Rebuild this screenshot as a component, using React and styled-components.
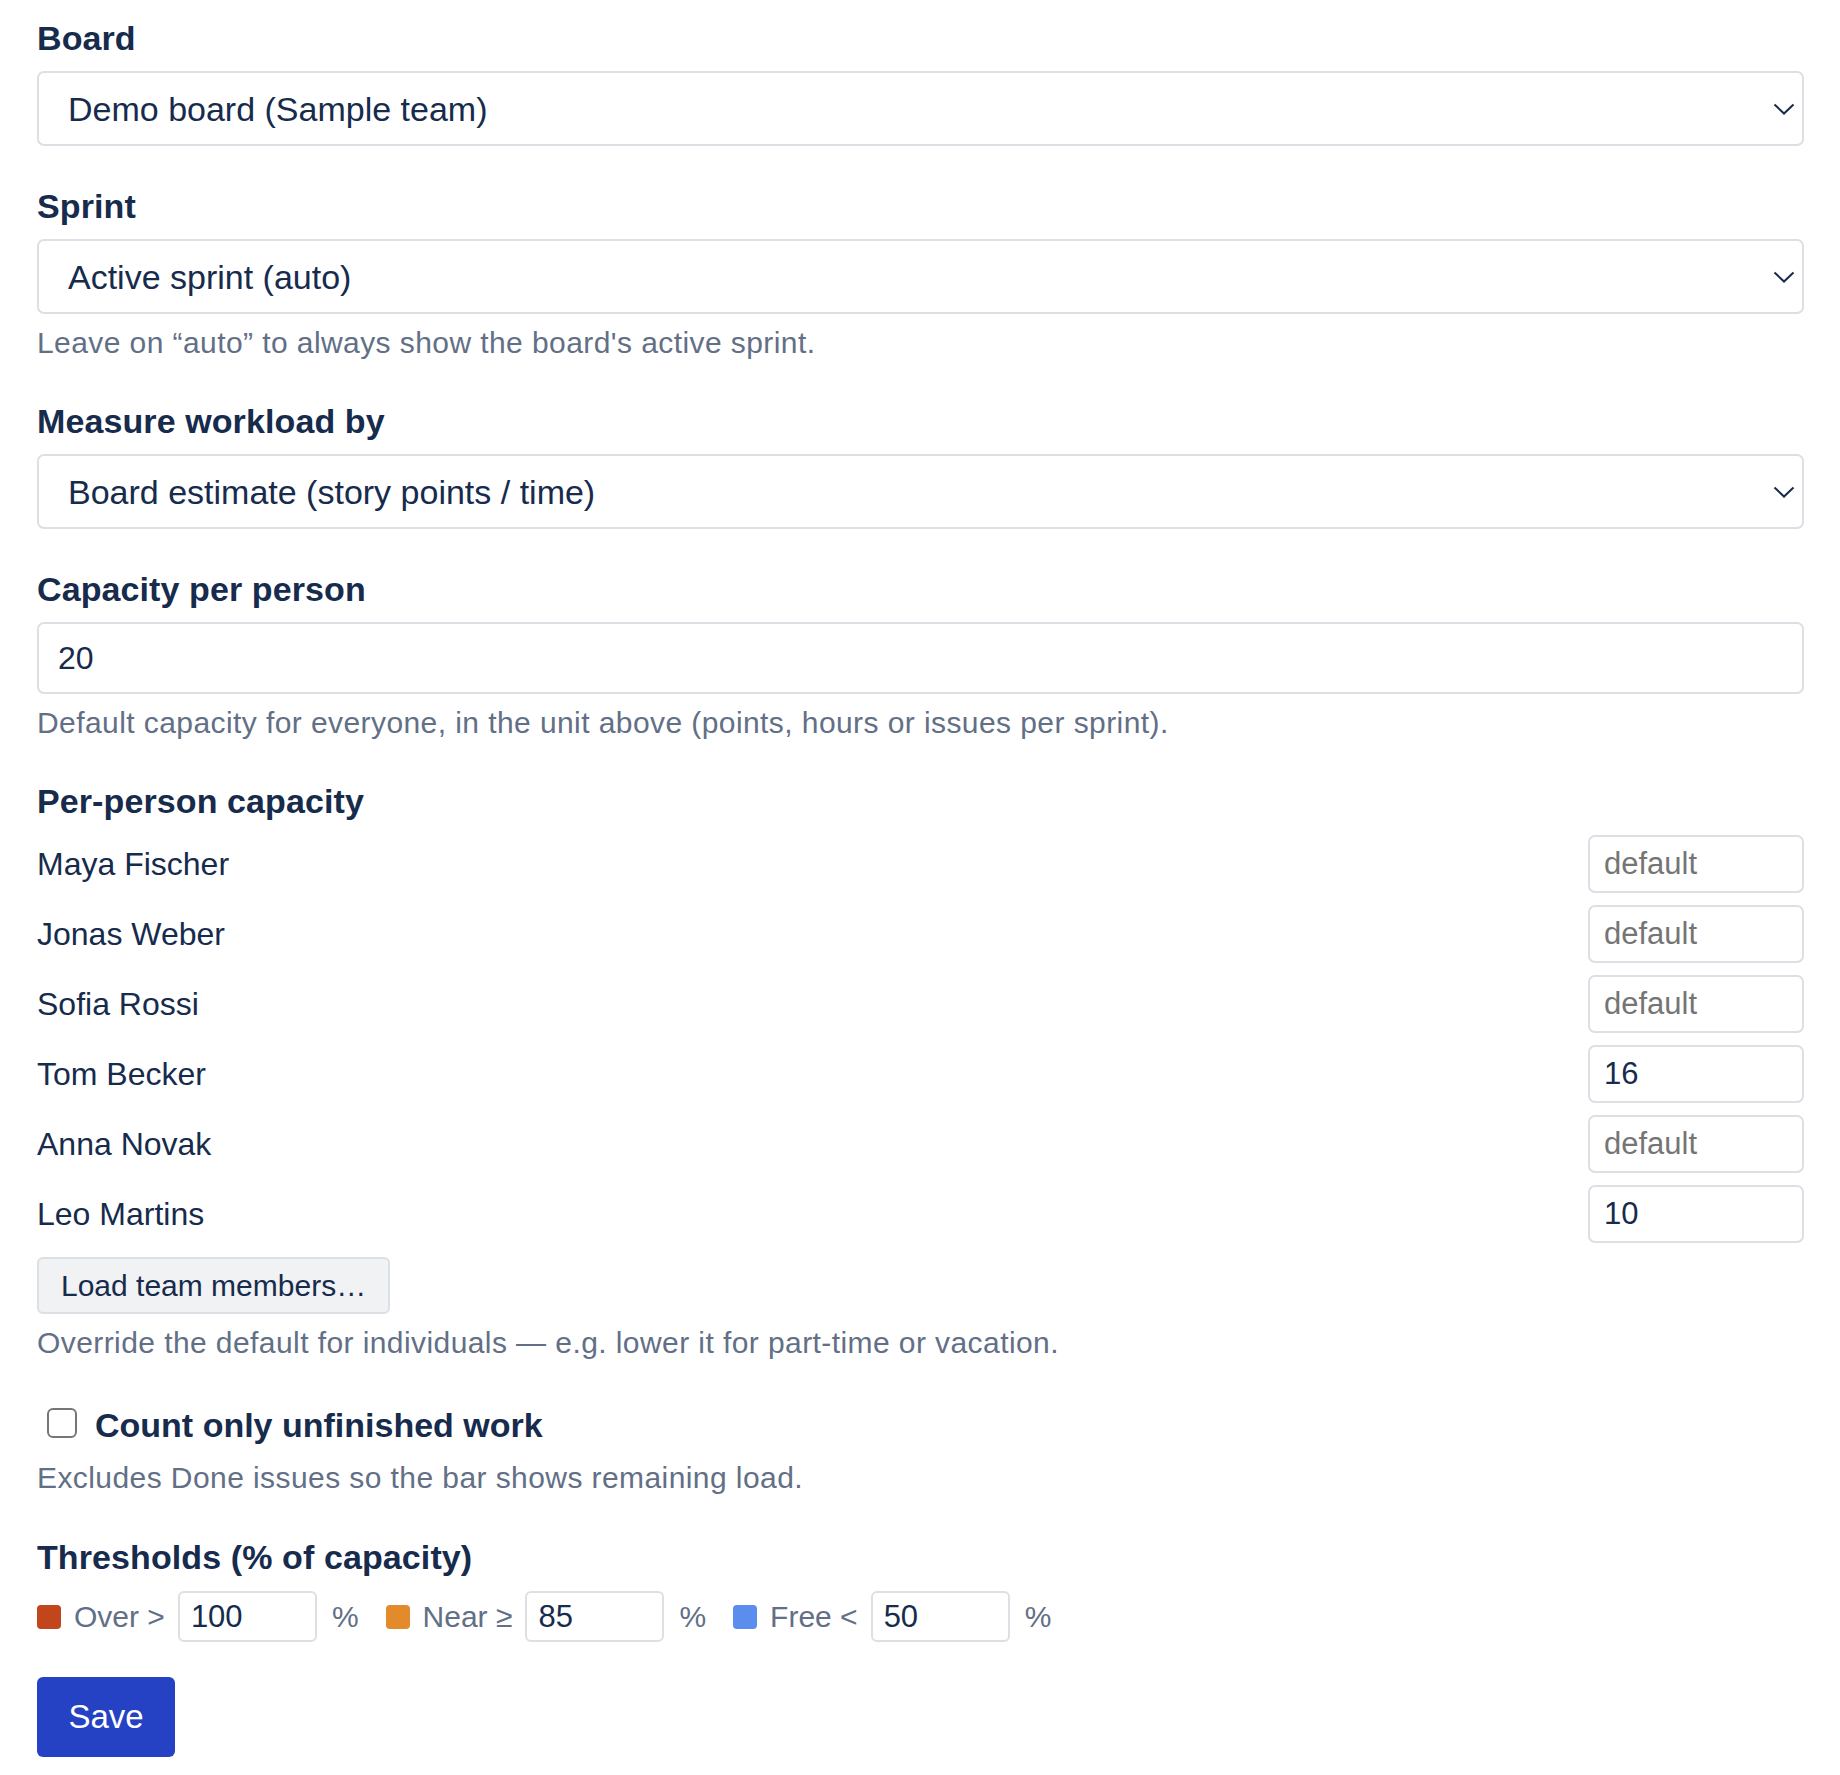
import styled, { createGlobalStyle } from "styled-components";

const GlobalStyle = createGlobalStyle`
  html, body {
    margin: 0;
    padding: 0;
    background: #ffffff;
  }
  body {
    font-family: "Liberation Sans", Arial, sans-serif;
    color: #172b4d;
  }
`;

const members = [
  { name: "Maya Fischer", value: "" },
  { name: "Jonas Weber", value: "" },
  { name: "Sofia Rossi", value: "" },
  { name: "Tom Becker", value: "16" },
  { name: "Anna Novak", value: "" },
  { name: "Leo Martins", value: "10" },
];

const thresholds = [
  { color: "#c2461c", label: "Over >", value: "100" },
  { color: "#e38a2b", label: "Near ≥", value: "85" },
  { color: "#5b8def", label: "Free <", value: "50" },
];

const ChevronIcon = () => (
  <svg width="22" height="12" viewBox="0 0 22 12" fill="none">
    <path d="M1.5 1.5 L11 10.5 L20.5 1.5" stroke="#172b4d" strokeWidth="2" />
  </svg>
);

const SelectField = ({ options }) => (
  <SelectWrap>
    <Select defaultValue={options[0]}>
      {options.map((o) => (
        <option key={o}>{o}</option>
      ))}
    </Select>
    <Chevron>
      <ChevronIcon />
    </Chevron>
  </SelectWrap>
);

const App = () => {
  return (
    <Page>
      <GlobalStyle />
      <Field>
        <Label>Board</Label>
        <SelectField options={["Demo board (Sample team)"]} />
      </Field>

      <Field>
        <Label>Sprint</Label>
        <SelectField options={["Active sprint (auto)"]} />
        <Help>Leave on “auto” to always show the board's active sprint.</Help>
      </Field>

      <Field>
        <Label>Measure workload by</Label>
        <SelectField options={["Board estimate (story points / time)"]} />
      </Field>

      <Field>
        <Label>Capacity per person</Label>
        <TextInput defaultValue="20" />
        <Help>
          Default capacity for everyone, in the unit above (points, hours or
          issues per sprint).
        </Help>
      </Field>

      <Field $gap={44}>
        <Label $bottom={14}>Per-person capacity</Label>
        <MemberList>
          {members.map((m) => (
            <MemberRow key={m.name}>
              <MemberName>{m.name}</MemberName>
              <SmallInput defaultValue={m.value} placeholder="default" />
            </MemberRow>
          ))}
        </MemberList>
        <LoadButton type="button">Load team members…</LoadButton>
        <Help>
          Override the default for individuals — e.g. lower it for part-time or
          vacation.
        </Help>
      </Field>

      <Field $gap={41}>
        <CheckRow>
          <Checkbox type="checkbox" />
          <CheckLabel>Count only unfinished work</CheckLabel>
        </CheckRow>
        <Help $top={15}>Excludes Done issues so the bar shows remaining load.</Help>
      </Field>

      <Field $gap={35}>
        <Label>Thresholds (% of capacity)</Label>
        <ThresholdRow>
          {thresholds.map((t) => (
            <ThresholdGroup key={t.label}>
              <Swatch $color={t.color} />
              <ThresholdText>{t.label}</ThresholdText>
              <ThresholdInput defaultValue={t.value} />
              <ThresholdText $left={2}>%</ThresholdText>
            </ThresholdGroup>
          ))}
        </ThresholdRow>
      </Field>

      <SaveButton type="button">Save</SaveButton>
    </Page>
  );
};

export default App;

const Page = styled.div`
  padding: 18px 36px 20px 37px;
  display: flex;
  flex-direction: column;
`;

const Field = styled.div`
  display: flex;
  flex-direction: column;
  margin-bottom: ${(p) => p.$gap ?? 40}px;
`;

const Label = styled.div`
  font-size: 34px;
  line-height: 40px;
  font-weight: 700;
  letter-spacing: 0.1px;
  color: #172b4d;
  margin-bottom: ${(p) => p.$bottom ?? 13}px;
`;

const Help = styled.div`
  font-size: 30px;
  line-height: 36px;
  letter-spacing: 0.42px;
  color: #626f86;
  margin-top: ${(p) => p.$top ?? 11}px;
`;

const SelectWrap = styled.div`
  position: relative;
  width: 100%;
`;

const Select = styled.select`
  appearance: none;
  -webkit-appearance: none;
  width: 100%;
  height: 75px;
  box-sizing: border-box;
  border: 2px solid #dcdfe4;
  border-radius: 7px;
  background: #ffffff;
  padding: 0 60px 0 29px;
  font-family: "Liberation Sans", Arial, sans-serif;
  font-size: 34px;
  color: #172b4d;
  outline: none;
`;

const Chevron = styled.span`
  position: absolute;
  right: 9px;
  top: 50%;
  transform: translateY(-50%);
  display: flex;
  pointer-events: none;
`;

const TextInput = styled.input`
  width: 100%;
  height: 72px;
  box-sizing: border-box;
  border: 2px solid #dcdfe4;
  border-radius: 7px;
  padding: 0 19px;
  font-family: "Liberation Sans", Arial, sans-serif;
  font-size: 32px;
  color: #172b4d;
  outline: none;
`;

const MemberList = styled.div`
  display: flex;
  flex-direction: column;
  gap: 12px;
`;

const MemberRow = styled.div`
  display: flex;
  align-items: center;
  justify-content: space-between;
  height: 58px;
`;

const MemberName = styled.span`
  font-size: 32px;
  color: #172b4d;
`;

const SmallInput = styled.input`
  width: 216px;
  height: 58px;
  box-sizing: border-box;
  border: 2px solid #dcdfe4;
  border-radius: 7px;
  padding: 0 14px;
  font-family: "Liberation Sans", Arial, sans-serif;
  font-size: 31px;
  color: #172b4d;
  outline: none;

  &::placeholder {
    color: #757575;
  }
`;

const LoadButton = styled.button`
  align-self: flex-start;
  margin-top: 14px;
  height: 57px;
  box-sizing: border-box;
  padding: 0 22px;
  border: 2px solid #dcdfe4;
  border-radius: 6px;
  background: #f1f2f4;
  font-family: "Liberation Sans", Arial, sans-serif;
  font-size: 30px;
  color: #172b4d;
`;

const CheckRow = styled.label`
  display: flex;
  align-items: center;
  gap: 18px;
  height: 40px;
`;

const Checkbox = styled.input`
  appearance: none;
  -webkit-appearance: none;
  margin: 0 0 4px 10px;
  width: 30px;
  height: 30px;
  box-sizing: border-box;
  border: 2px solid #767676;
  border-radius: 6px;
  background: #ffffff;
`;

const CheckLabel = styled.span`
  font-size: 34px;
  font-weight: 700;
  color: #172b4d;
`;

const ThresholdRow = styled.div`
  display: flex;
  align-items: center;
  gap: 27px;
  margin-top: 1px;
`;

const ThresholdGroup = styled.div`
  display: flex;
  align-items: center;
  gap: 13px;
`;

const Swatch = styled.span`
  width: 24px;
  height: 24px;
  border-radius: 4px;
  background: ${(p) => p.$color};
`;

const ThresholdText = styled.span`
  font-size: 30px;
  color: #626f86;
  margin-left: ${(p) => p.$left ?? 0}px;
`;

const ThresholdInput = styled.input`
  width: 139px;
  height: 51px;
  box-sizing: border-box;
  border: 2px solid #dcdfe4;
  border-radius: 6px;
  padding: 0 11px;
  font-family: "Liberation Sans", Arial, sans-serif;
  font-size: 31px;
  color: #172b4d;
  outline: none;
`;

const SaveButton = styled.button`
  align-self: flex-start;
  width: 138px;
  height: 80px;
  border: none;
  border-radius: 6px;
  background: #2541c4;
  color: #ffffff;
  font-family: "Liberation Sans", Arial, sans-serif;
  font-size: 33px;
`;
